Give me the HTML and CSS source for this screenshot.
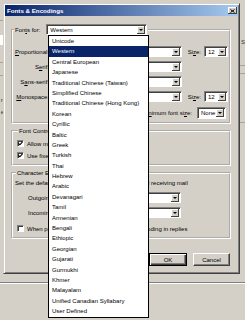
FILE: index.html
```html
<!DOCTYPE html>
<html>
<head>
<meta charset="utf-8">
<title>Fonts &amp; Encodings</title>
<link rel="stylesheet" href="styles.css">
</head>
<body>
<div class="desk">
  <div class="bg-top">
    <div class="bg-left">
      <div class="bl-a"></div>
      <div class="bl-white"></div>
      <div class="bl-b"></div>
      <div class="bl-c"></div>
      <div class="bl-txt">n</div>
      <div class="bl-txt2">e</div>
    </div>
    <div class="bg-right">
      <div class="br-s">S</div>
      <div class="br-l1"></div>
      <div class="br-l2"></div>
      <div class="br-l3"></div>
    </div>
  </div>
  <div class="bg-bottom-line"></div>
</div>

<div class="dialog">
  <div class="titlebar">
    <span class="title">Fonts &amp; Encodings</span>
    <span class="close"><svg width="5" height="4" viewBox="0 0 5 4"><path d="M0.5 0.5 L4.5 3.5 M4.5 0.5 L0.5 3.5" stroke="#000" stroke-width="1"/></svg></span>
  </div>
  <div class="body">
    <fieldset class="group g1">
      <legend class="leg1">
        <span class="lbl-for">Fon<u>t</u>s for:</span>
        <span class="select sel-for"><span class="val">Western</span><i class="arrow"></i></span>
      </legend>
      <div class="fontgrid">
        <span class="lbl"><u>P</u>roportional:</span>
        <span class="select"><span class="val"></span><i class="arrow"></i></span>
        <span class="lbl">Si<u>z</u>e:</span>
        <span class="select size"><span class="val">12</span><i class="arrow"></i></span>

        <span class="lbl">S<u>e</u>rif:</span>
        <span class="select"><span class="val"></span><i class="arrow"></i></span>
        <span></span><span></span>

        <span class="lbl">S<u>a</u>ns-serif:</span>
        <span class="select"><span class="val"></span><i class="arrow"></i></span>
        <span></span><span></span>

        <span class="lbl"><u>M</u>onospace:</span>
        <span class="select"><span class="val"></span><i class="arrow"></i></span>
        <span class="lbl">Si<u>z</u>e:</span>
        <span class="select size"><span class="val">12</span><i class="arrow"></i></span>
      </div>
      <div class="minrow">
        <span>Mi<u>n</u>imum font si<u>z</u>e:</span>
        <span class="select none"><span class="val">None</span><i class="arrow"></i></span>
      </div>
    </fieldset>

    <fieldset class="group g2">
      <legend class="leg">Font Control</legend>
      <div class="checks">
        <div class="checkrow"><span class="cb"><svg width="5" height="5" viewBox="0 0 5 5"><path d="M0.5 2.3 L1.9 3.8 L4.5 0.8" fill="none" stroke="#000" stroke-width="1.1"/></svg></span><span>Allow messages to use other fonts</span></div>
        <div class="checkrow"><span class="cb"><svg width="5" height="5" viewBox="0 0 5 5"><path d="M0.5 2.3 L1.9 3.8 L4.5 0.8" fill="none" stroke="#000" stroke-width="1.1"/></svg></span><span>Use fixed width font for plain text</span></div>
      </div>
    </fieldset>

    <fieldset class="group g3">
      <legend class="leg">Character Encoding</legend>
      <div class="enc-intro">Set the default character encoding for sending and receiving mail</div>
      <div class="encgrid">
        <span class="elbl">Outgoing Mail:</span>
        <span class="select enc"><span class="val"></span><i class="arrow"></i></span>
        <span class="elbl">Incoming Mail:</span>
        <span class="select enc"><span class="val"></span><i class="arrow"></i></span>
      </div>
      <div class="checkrow last"><span class="cb"></span><span>When possible, use the default character encoding in replies</span></div>
    </fieldset>

    <div class="buttons">
      <button class="btn default">OK</button>
      <button class="btn">Cancel</button>
    </div>
  </div>
</div>

<ul class="dropdown">
  <li>Unicode</li>
  <li class="sel">Western</li>
  <li>Central European</li>
  <li>Japanese</li>
  <li>Traditional Chinese (Taiwan)</li>
  <li>Simplified Chinese</li>
  <li>Traditional Chinese (Hong Kong)</li>
  <li>Korean</li>
  <li>Cyrillic</li>
  <li>Baltic</li>
  <li>Greek</li>
  <li>Turkish</li>
  <li>Thai</li>
  <li>Hebrew</li>
  <li>Arabic</li>
  <li>Devanagari</li>
  <li>Tamil</li>
  <li>Armenian</li>
  <li>Bengali</li>
  <li>Ethiopic</li>
  <li>Georgian</li>
  <li>Gujarati</li>
  <li>Gurmukhi</li>
  <li>Khmer</li>
  <li>Malayalam</li>
  <li>Unified Canadian Syllabary</li>
  <li>User Defined</li>
</ul>
</body>
</html>
```

FILE: styles.css
```css
* { box-sizing: border-box; }
html, body { margin: 0; padding: 0; }
body {
  width: 245px;
  height: 320px;
  overflow: hidden;
  position: relative;
  background: #d4d0c8;
  font-family: "Liberation Sans", Arial, sans-serif;
  font-size: 6px;
  line-height: 8px;
  color: #000;
}
u { text-decoration-thickness: 0.5px; }

/* background application */
.desk { height: 320px; display: flex; flex-direction: column; }
.bg-top { height: 282px; display: flex; justify-content: space-between; }
.bg-left { width: 4px; display: flex; flex-direction: column; }
.bl-a { height: 21px; border-bottom: 1px solid #a8a49c; }
.bl-white { height: 10px; margin-top: 14px; background: #fff; }
.bl-b { height: 18px; border-bottom: 1px solid #a8a49c; }
.bl-c { height: 13px; border-bottom: 1px solid #a8a49c; }
.bl-txt { margin-top: 20px; height: 8px; color: #333; direction: rtl; overflow: hidden; }
.bl-txt2 { margin-top: 4px; height: 8px; color: #333; direction: rtl; overflow: hidden; }
.bg-right { width: 5px; display: flex; flex-direction: column; }
.br-s { margin-top: 38px; height: 8px; padding-left: 1px; color: #333; }
.br-l1 { height: 20px; border-bottom: 1px solid #a8a49c; }
.br-l2 { height: 8px; border-bottom: 1px solid #a8a49c; }
.br-l3 { height: 49px; border-bottom: 1px solid #a8a49c; }
.bg-bottom-line { height: 2px; border-top: 1px solid #808080; border-bottom: 1px solid #fff; }

/* dialog window */
.dialog {
  position: absolute;
  left: 3px;
  top: 3px;
  width: 237px;
  height: 271px;
  background: #d4d0c8;
  border: 1px solid;
  border-color: #d4d0c8 #404040 #404040 #d4d0c8;
  box-shadow: inset 1px 1px #fff, inset -1px -1px #808080;
  padding: 1px;
  display: flex;
  flex-direction: column;
}
.titlebar {
  height: 11px;
  flex: none;
  display: flex;
  align-items: center;
  padding: 0 1px 0 2px;
  background: linear-gradient(to right, #0a246a, #a6caf0);
}
.title { color: #fff; font-weight: bold; font-size: 6.2px; }
.close {
  margin-left: auto;
  width: 9px;
  height: 7px;
  background: #d4d0c8;
  box-shadow: inset -1px -1px #404040, inset 1px 1px #fff;
  display: flex;
  align-items: center;
  justify-content: center;
}
.close svg { display: block; }

.body { padding: 8px 7px 0 6px; display: flex; flex-direction: column; }

.group {
  margin: 0;
  padding: 0;
  min-width: 0;
  border: 2px groove #fff;
}
.group legend { padding: 0 1px; margin-left: 1px; }
.leg1 { display: flex; align-items: center; gap: 6px; margin-left: 2px; height: 11px; }
.leg { line-height: 8px; height: 8px; }

.g1 { padding: 11px 1px 3px 0; }
.g2 { margin-top: 3px; padding: 5px 0 5px 4px; }
.g3 { margin-top: 3px; padding: 2px 0 5px 2px; }

/* selects */
.select {
  display: flex;
  align-items: center;
  height: 11px;
  background: #fff;
  border: 1px solid;
  border-color: #808080 #fff #fff #808080;
  box-shadow: inset 1px 1px #404040;
  padding: 1px 1px 1px 2px;
  overflow: hidden;
  white-space: nowrap;
}
.select .val { flex: 1; overflow: hidden; padding-left: 1px; }
.arrow {
  flex: none;
  width: 8px;
  height: 8px;
  background: #d4d0c8;
  box-shadow: inset -1px -1px #404040, inset 1px 1px #fff;
  display: flex;
  align-items: center;
  justify-content: center;
}
.arrow::after {
  content: "";
  border-left: 2px solid transparent;
  border-right: 2px solid transparent;
  border-top: 2px solid #000;
}
.sel-for { width: 101px; }

.fontgrid {
  display: grid;
  grid-template-columns: 36px 133px 19px 27px;
  grid-auto-rows: 11px;
  row-gap: 4px;
  align-items: center;
}
.lbl { text-align: right; white-space: nowrap; }
.size { width: 24px; justify-self: end; }
.minrow {
  margin-top: 5px;
  padding-right: 2px;
  display: flex;
  justify-content: flex-end;
  align-items: center;
  gap: 5px;
}
.none { width: 29px; height: 12px; }

/* checkboxes */
.checks { display: flex; flex-direction: column; gap: 5px; }
.checkrow { display: flex; align-items: center; gap: 3px; height: 7px; white-space: nowrap; }
.cb {
  flex: none;
  width: 7px;
  height: 7px;
  background: #fff;
  border: 1px solid;
  border-color: #808080 #fff #fff #808080;
  box-shadow: inset 1px 1px #404040;
  display: flex;
  align-items: center;
  justify-content: center;
}
.cb svg { display: block; }
.checkrow.last { margin-top: 7px; padding-left: 2px; }

.enc-intro { white-space: nowrap; }
.encgrid {
  margin-top: 5px;
  display: grid;
  grid-template-columns: 60px 106px;
  grid-auto-rows: 11px;
  row-gap: 4px;
  align-items: center;
}
.elbl { padding-left: 13px; white-space: nowrap; }

/* buttons */
.buttons {
  margin-top: 14px;
  padding-right: 1px;
  display: flex;
  justify-content: flex-end;
  gap: 6px;
}
.btn {
  font: inherit;
  color: #000;
  height: 13px;
  padding: 0;
  margin: 0;
  background: #d4d0c8;
  border: 1px solid;
  border-color: #fff #404040 #404040 #fff;
  box-shadow: inset -1px -1px #808080;
  width: 37px;
}
.btn.default {
  width: 38px;
  border: 1px solid #000;
  box-shadow: inset 1px 1px #fff, inset -1px -1px #404040, inset -2px -2px #808080;
}

/* dropdown list (open popup) */
.dropdown {
  position: absolute;
  left: 48px;
  top: 35px;
  width: 101px;
  margin: 0;
  padding: 0;
  list-style: none;
  background: #fff;
  border: 1px solid #000;
}
.dropdown li {
  height: 10.4px;
  line-height: 10.4px;
  padding-left: 3px;
  white-space: nowrap;
  overflow: hidden;
}
.dropdown li.sel { background: #0a246a; color: #fff; }
```
